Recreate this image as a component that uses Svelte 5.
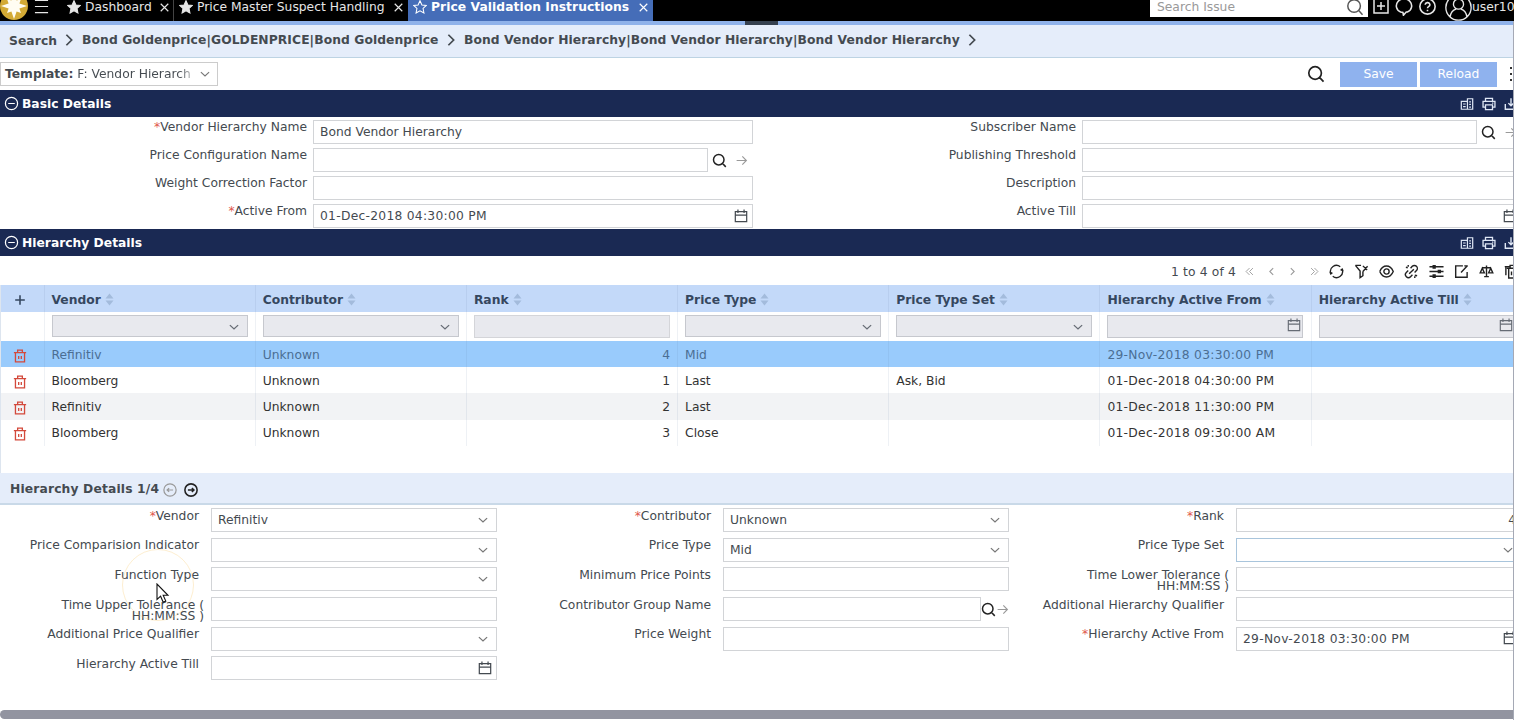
<script lang="ts">
  type Field = {
    label: string;
    label2?: string;
    value?: string;
    required?: boolean;
    kind?: "select" | "date" | "lookup" | "number";
    focused?: boolean;
  };

  const basicColumns: Field[][] = [
    [
      { label: "Vendor Hierarchy Name", value: "Bond Vendor Hierarchy", required: true },
      { label: "Price Configuration Name", kind: "lookup" },
      { label: "Weight Correction Factor" },
      { label: "Active From", value: "01-Dec-2018 04:30:00 PM", required: true, kind: "date" },
    ],
    [
      { label: "Subscriber Name", kind: "lookup" },
      { label: "Publishing Threshold" },
      { label: "Description" },
      { label: "Active Till", kind: "date" },
    ],
  ];

  const detailColumns: Field[][] = [
    [
      { label: "Vendor", value: "Refinitiv", required: true, kind: "select" },
      { label: "Price Comparision Indicator", kind: "select" },
      { label: "Function Type", kind: "select" },
      { label: "Time Upper Tolerance (", label2: "HH:MM:SS )" },
      { label: "Additional Price Qualifier", kind: "select" },
      { label: "Hierarchy Active Till", kind: "date" },
    ],
    [
      { label: "Contributor", value: "Unknown", required: true, kind: "select" },
      { label: "Price Type", value: "Mid", kind: "select" },
      { label: "Minimum Price Points" },
      { label: "Contributor Group Name", kind: "lookup" },
      { label: "Price Weight" },
    ],
    [
      { label: "Rank", value: "4", required: true, kind: "number" },
      { label: "Price Type Set", kind: "select", focused: true },
      { label: "Time Lower Tolerance (", label2: "HH:MM:SS )" },
      { label: "Additional Hierarchy Qualifier" },
      { label: "Hierarchy Active From", value: "29-Nov-2018 03:30:00 PM", required: true, kind: "date" },
    ],
  ];

  const columns = [
    { title: "Vendor", filter: "select" },
    { title: "Contributor", filter: "select" },
    { title: "Rank", filter: "text" },
    { title: "Price Type", filter: "select" },
    { title: "Price Type Set", filter: "select" },
    { title: "Hierarchy Active From", filter: "date" },
    { title: "Hierarchy Active Till", filter: "date" },
  ];

  const rows = [
    ["Refinitiv", "Unknown", "4", "Mid", "", "29-Nov-2018 03:30:00 PM", ""],
    ["Bloomberg", "Unknown", "1", "Last", "Ask, Bid", "01-Dec-2018 04:30:00 PM", ""],
    ["Refinitiv", "Unknown", "2", "Last", "", "01-Dec-2018 11:30:00 PM", ""],
    ["Bloomberg", "Unknown", "3", "Close", "", "01-Dec-2018 09:30:00 AM", ""],
  ];

  let selected = $state(0);

  // all icons share a 16x16 box and are stroked with the current colour
  const icons: Record<string, string> = {
    search: "M7.2 1.5a5.6 5.6 0 1 0 0 11.2a5.6 5.6 0 1 0 0-11.2M11.3 11.2l3.4 3.6",
    arrow: "M2 8h12M9 3l5 5l-5 5",
    down: "M2.5 5.5l5.5 5l5.5-5",
    right: "M5 2l6 6l-6 6",
    left: "M11 2l-6 6l6 6",
    first: "M8 3L3 8l5 5M13 3L8 8l5 5",
    last: "M3 3l5 5l-5 5M8 3l5 5l-5 5",
    close: "M2.5 2.5l11 11M13.5 2.5l-11 11",
    calendar: "M1.5 3h13v11.5h-13zM1.5 7h13M4.5 .5v4M11.5 .5v4",
    collapse: "M8 1.5a6.5 6.5 0 1 0 0 13a6.5 6.5 0 1 0 0-13M4.5 8h7",
    menu: "M1 1.5h14M1 8h14M1 14.500h14",
    add: "M1 1h14v14H1zM8 4v8M4 8h8",
    chat: "M5 12.5A6.8 6.2 0 1 1 11 12.500H10L7.500 15.300L7 12.800z",
    help: "M8 .8a7.2 7.2 0 1 0 0 14.4a7.2 7.2 0 1 0 0-14.4M5.8 6.3a2.2 2 0 1 1 3.2 1.8q-1 .5-1 1.6M8 11v1.5",
    user: "M8 .5a7.5 7.5 0 1 0 0 15a7.5 7.5 0 1 0 0-15M8 3a3 3 0 1 0 0 6a3 3 0 1 0 0-6M3 13.5q.6-3.6 3.5-4.5M13 13.5q-.6-3.6-3.5-4.5",
    building: "M1.500 5h7v9h-7zM8.500 14V2h6v12h-6M3.500 8h3M3.500 11h3M10.500 5.500h2M10.500 8.500h2M10.500 11.500h2",
    print: "M4 5V1.5h8V5M4 11.5H1.2V5h13.6v6.5H12M4 9h8v5.5H4zM11.5 7h1.5",
    download: "M1.5 8v6h13V8M8 1.5v8.5M5 7l3 3l3-3",
    refresh: "M1.800 10A6.500 6.500 0 0 1 12 2.900M14.200 6A6.500 6.500 0 0 1 4 13.100M1 8.500L1.900 10.500L3.600 9.200M15 7.500L14.100 5.500L12.400 6.800",
    filter: "M1.500 1.500l5 6v7l3-2v-4.500M1.500 1.500h6M9.500 8l5-5.500M9.500 2l4.500 4.500",
    eye: "M.8 8q2.500-5.800 7.200-5.800T15.200 8q-2.500 5.800-7.200 5.800T.8 8M8 5.200a2.8 2.8 0 1 0 0 5.600a2.8 2.8 0 1 0 0-5.600",
    link: "M7 4.5l1.8-2a3.1 3.1 0 0 1 4.5 4.5l-2 2M4.5 7l-2 2a3.1 3.1 0 0 0 4.5 4.5l2-2M5.5 10.5l5-5M2 3.5l2 .5M4.5 1v2M14 12.5l-2.5-.5M11.5 15v-2",
    sliders: "M.5 3h15M.5 8h15M.5 13h15M4.500 1.800h2v2.400h-2zM10 6.800h2v2.400h-2zM4.500 11.800h2v2.400h-2z",
    edit: "M9.500 2H1.800v12.200H14V8.500M7.500 9l7-7.500M11 2h3.200",
    scales: "M8 1.500v11.500M5.500 13.500h5M3 4h10M3.500 4.500L1.300 9.500h4.400zM12.500 4.500l-2.200 5h4.400z",
    trash: "M1 4.2h14M5.3 4V1.3h5.4V4M2.8 4.5v10.2h10.4V4.5M6.5 8v3.5M9.5 8v3.5",
    trashes: "M3 4.500h12M6.500 4V1.500h5V4M5 5v10h9V5M.8 2.800h5M2 3v9M8 8v4M11 8v4",
    prev: "M8 1a7 7 0 1 0 0 14a7 7 0 1 0 0-14M4.5 8h7M7 5.8l-2.3 2.2l2.3 2.2",
    next: "M8 1a7 7 0 1 0 0 14a7 7 0 1 0 0-14M4.5 8h7M9 5.8l2.3 2.2l-2.3 2.2",
    plus: "M8 2.5v11M2.5 8h11",
  };

  const star = "M8 .8l2.2 4.8l5.1.6l-3.8 3.5l1 5.1L8 12.3l-4.5 2.5l1-5.1L.7 6.2l5.1-.6z";
  const tools = ["refresh", "filter", "eye", "link", "sliders", "edit", "scales", "trashes"];
</script>

{#snippet icon(name: string, size = 14, weight = 1.5)}
  <svg class="icon" width={size} height={size} viewBox="0 0 16 16" fill="none" stroke="currentColor" stroke-width={weight}>
    <path d={icons[name]} />
  </svg>
{/snippet}

{#snippet starIcon(filled: boolean)}
  <svg class="icon" width="14" height="14" viewBox="0 0 16 16" fill={filled ? "currentColor" : "none"} stroke="currentColor" stroke-width="1.2">
    <path d={star} />
  </svg>
{/snippet}

{#snippet sectionHead(title: string)}
  <div class="section-head">
    {@render icon("collapse", 15, 1.3)}
    <h2>{title}</h2>
    <div class="section-icons">
      {@render icon("building", 14, 1.4)}
      {@render icon("print", 14, 1.5)}
      {@render icon("download", 14, 1.6)}
    </div>
  </div>
{/snippet}

{#snippet formRow(field: Field)}
  <div class="row">
    <div class="label" class:wrapped={field.label2}>
      {#if field.required}<span class="required">*</span>{/if}{field.label}
      {#if field.label2}<br />{field.label2}{/if}
    </div>
    <div class="control">
      <div class="field" class:focused={field.focused} class:number={field.kind === "number"}>
        <span class:date={field.kind === "date"}>{field.value ?? ""}</span>
        {#if field.kind === "select"}
          <i class="muted">{@render icon("down", 12, 1.7)}</i>
        {:else if field.kind === "date"}
          <i class="calendar">{@render icon("calendar", 14, 1.4)}</i>
        {/if}
      </div>
      {#if field.kind === "lookup"}
        <div class="lookup">
          {@render icon("search", 15, 1.6)}
          <i class="go">{@render icon("arrow", 13, 1.4)}</i>
        </div>
      {/if}
    </div>
  </div>
{/snippet}

<div class="app">
  <header>
    <svg class="logo" width="30" height="30" viewBox="0 0 30 30">
      <circle cx="15" cy="15" r="14" fill="#d3aa35" />
      <path d="M15 2l2.6 7.6L22 8l-1.600 4.400L28 15l-7.6 2.6L22 22l-4.400-1.600L15 28l-2.6-7.6L8 22l1.600-4.400L2 15l7.6-2.6L8 8l4.400 1.600z" fill="#fffdf2" />
    </svg>
    <div class="menu">{@render icon("menu", 15, 1.3)}</div>
    <nav>
      <div class="tab first">{@render starIcon(true)}<span>Dashboard</span>{@render icon("close", 11, 1.7)}</div>
      <div class="tab second">{@render starIcon(true)}<span>Price Master Suspect Handling</span>{@render icon("close", 11, 1.7)}</div>
      <div class="tab active">{@render starIcon(false)}<span>Price Validation Instructions</span>{@render icon("close", 11, 1.7)}</div>
    </nav>
    <div class="search-box"><span>Search Issue</span>{@render icon("search", 18, 1.3)}</div>
    <div class="user-icons">
      {@render icon("add", 16, 1.5)}
      {@render icon("chat", 18, 1.4)}
      {@render icon("help", 17, 1.5)}
    </div>
    <div class="user">{@render icon("user", 27, 0.8)}<span>user10</span></div>
  </header>

  <div class="breadcrumb">
    <i class="handle"></i>
    <span class="crumb-root">Search</span>
    {@render icon("right", 14, 2)}
    <span>Bond Goldenprice|GOLDENPRICE|Bond Goldenprice</span>
    {@render icon("right", 14, 2)}
    <span>Bond Vendor Hierarchy|Bond Vendor Hierarchy|Bond Vendor Hierarchy</span>
    {@render icon("right", 14, 2)}
  </div>

  <div class="toolbar">
    <div class="template">
      <b>Template:</b>
      <span class="template-name">F: Vendor Hierarch</span>
      <i class="muted">{@render icon("down", 12, 1.5)}</i>
    </div>
    <div class="actions">
      {@render icon("search", 18, 1.5)}
      <button>Save</button>
      <button>Reload</button>
      <i class="dots"></i>
    </div>
  </div>

  {@render sectionHead("Basic Details")}
  <div class="form basic">
    {#each basicColumns as fields}
      <div class="form-col">
        {#each fields as field}{@render formRow(field)}{/each}
      </div>
    {/each}
  </div>

  {@render sectionHead("Hierarchy Details")}
  <div class="grid-tools">
    <span>1 to 4 of 4</span>
    <div class="pager">
      {@render icon("first", 11, 1.3)}
      {@render icon("left", 9, 1.9)}
      {@render icon("right", 9, 1.9)}
      {@render icon("last", 11, 1.3)}
    </div>
    <div class="tools">
      {#each tools as name}{@render icon(name, 15, 1.5)}{/each}
    </div>
  </div>

  <div class="table">
    <div class="tr head">
      <div class="td tiny">{@render icon("plus", 14, 1.8)}</div>
      {#each columns as column}
        <div class="td">
          {column.title}
          <svg class="sort" width="9" height="13" viewBox="0 0 9 13"><path d="M4.500 .5L8.500 5.500H.5zM4.500 12.500L8.500 7.500H.5z" fill="#a3bbdc" /></svg>
        </div>
      {/each}
    </div>
    <div class="tr filters">
      <div class="td tiny"></div>
      {#each columns as column}
        <div class="td">
          <div class="filter" class:short={column.filter === "select"} class:light={column.filter === "text"}>
            {#if column.filter === "select"}
              {@render icon("down", 12, 1.8)}
            {:else if column.filter === "date"}
              {@render icon("calendar", 14, 1.3)}
            {/if}
          </div>
        </div>
      {/each}
    </div>
    {#each rows as row, i}
      <!-- svelte-ignore a11y_click_events_have_key_events, a11y_no_static_element_interactions -->
      <div class="tr body" class:striped={i === 2} class:selected={i === selected} onclick={() => (selected = i)}>
        <div class="td tiny trash">{@render icon("trash", 14, 1.5)}</div>
        {#each row as cell, c}
          <div class="td" class:right={c === 2} class:date={c >= 5}>{cell}</div>
        {/each}
      </div>
    {/each}
  </div>

  <div class="detail-head">
    <b>Hierarchy Details {selected + 1}/4</b>
    <i class="prev">{@render icon("prev", 14, 1.4)}</i>
    <i class="next">{@render icon("next", 14, 1.8)}</i>
  </div>
  <div class="form detail">
    {#each detailColumns as fields}
      <div class="form-col">
        {#each fields as field}{@render formRow(field)}{/each}
      </div>
    {/each}
  </div>

  <div class="scrollbar"></div>
  <i class="edge"></i>
  <i class="click-ring"></i>
  <svg class="cursor" width="14" height="22" viewBox="0 0 14 22">
    <path d="M1 1v15.500l3.600-3.300l2.600 6l2.600-1.100l-2.600-5.800h4.800z" fill="#fff" stroke="#111" stroke-width="1.100" />
  </svg>
</div>

<style>
  :global(body) {
    margin: 0;
    overflow: hidden;
  }

  .app {
    position: relative;
    display: flex;
    flex-direction: column;
    width: 1514px;
    height: 720px;
    overflow: hidden;
    background: #fff;
    color: #444a50;
    font-family: "DejaVu Sans", Verdana, sans-serif;
    font-size: 12.3px;
    line-height: 16px;
    white-space: nowrap;
  }
  .icon {
    display: block;
    flex: none;
  }
  i {
    display: block;
    flex: none;
  }
  .date {
    letter-spacing: 0.27px;
  }

  header {
    display: flex;
    flex: none;
    height: 21px;
    background: #000;
    color: #e6e6e6;
    overflow: hidden;
  }
  header > * {
    flex: none;
  }
  .logo {
    margin: -9px 0 0 -1px;
  }
  .menu {
    box-sizing: border-box;
    padding-left: 5px;
    width: 31px;
    margin-top: -1px;
  }
  nav {
    display: flex;
    width: 1090px;
  }
  .tab {
    display: flex;
    flex: none;
    box-sizing: border-box;
    height: 21px;
    padding: 0 4px 7px 5px;
    align-items: center;
    gap: 4px;
  }
  .tab span {
    flex: 1;
  }
  .first {
    width: 114px;
    padding: 0 3px 7px 7px;
    border-right: 1px solid #444;
  }
  .second {
    width: 234px;
  }
  .active {
    width: 245px;
    background: #456db8;
    color: #fff;
    font-weight: bold;
    letter-spacing: 0.05px;
  }
  .search-box {
    display: flex;
    box-sizing: border-box;
    width: 218px;
    height: 17px;
    padding: 0 4px 4px 7px;
    align-items: center;
    justify-content: space-between;
    background: #fff;
    color: #999;
  }
  .search-box .icon {
    color: #555;
  }
  .user-icons {
    display: flex;
    box-sizing: border-box;
    gap: 6px;
    padding-left: 5px;
    width: 77px;
    margin-top: -2px;
  }
  .user {
    display: flex;
    margin-top: -6px;
  }
  .user span {
    margin-top: 5px;
  }

  .breadcrumb {
    position: relative;
    display: flex;
    flex: none;
    box-sizing: border-box;
    height: 37px;
    padding: 0 0 2px 9px;
    align-items: center;
    border-top: 4px solid #8fb2ea;
    border-bottom: 1px solid #bdd3e3;
    background: #e5edfa;
    font-weight: bold;
    letter-spacing: 0.08px;
  }
  .breadcrumb span {
    margin: 0 5.500px 0 6px;
  }
  .breadcrumb .crumb-root {
    margin: 2px 5px 0 0;
  }
  .handle {
    position: absolute;
    left: 745px;
    top: -4px;
    width: 33px;
    height: 4px;
    background: #35404f;
  }

  .toolbar {
    display: flex;
    flex: none;
    height: 32px;
    align-items: center;
  }
  .template {
    display: flex;
    box-sizing: border-box;
    width: 218px;
    height: 24px;
    padding: 0 5px 0 4px;
    align-items: center;
    gap: 4px;
    border: 1px solid #ccc;
  }
  .template-name {
    flex: 1;
    overflow: hidden;
    background: linear-gradient(90deg, #444a50 86%, #ddd 100%);
    background-clip: text;
    color: transparent;
  }
  .actions {
    display: flex;
    align-items: center;
    margin-left: 1089px;
    color: #222;
  }
  button {
    width: 77px;
    height: 25px;
    flex: none;
    margin: 0 0 0 3px;
    padding: 0;
    border: 0;
    background: #8fb2ee;
    color: #fff;
    font: inherit;
  }
  .actions .icon + button {
    margin-left: 15px;
  }
  .dots {
    width: 2px;
    height: 2px;
    margin-left: 13px;
    background: #333;
    box-shadow: 0 -6px #333, 0 6px #333;
  }

  .section-head {
    display: flex;
    flex: none;
    box-sizing: border-box;
    height: 27px;
    padding-left: 4px;
    align-items: center;
    background: #1a2953;
    color: #fff;
  }
  h2 {
    flex: none;
    width: 1438px;
    margin: 0 0 0 3px;
    font-size: inherit;
  }
  .section-icons {
    display: flex;
    flex: none;
    gap: 8px;
    color: #dfe7f5;
  }

  .form {
    display: flex;
    flex: none;
  }
  .form-col {
    flex: none;
  }
  .row {
    display: flex;
    align-items: flex-start;
  }
  .label {
    flex: none;
    box-sizing: border-box;
    text-align: right;
  }
  .required {
    color: #e0564c;
  }
  .control {
    display: flex;
    flex: none;
  }
  .field {
    display: flex;
    flex: 1;
    box-sizing: border-box;
    height: 24px;
    padding: 0 6px;
    align-items: center;
    justify-content: space-between;
    border: 1px solid #d2d4d7;
    background: #fff;
  }
  .field.focused {
    border-color: #a9c5dc;
  }
  .field.number {
    justify-content: flex-end;
    padding-right: 5px;
  }
  .calendar {
    margin: -1px -2px 0 0;
  }
  .lookup {
    display: flex;
    box-sizing: border-box;
    align-items: center;
    color: #222;
  }
  .go {
    color: #999;
  }
  .muted {
    color: #777;
    padding-right: 1px;
  }

  .basic {
    height: 109px;
    padding-top: 3px;
  }
  .basic .row {
    height: 28px;
  }
  .basic .label {
    width: 313px;
    padding-right: 6px;
    margin-top: -1px;
  }
  .basic .form-col + .form-col .label {
    width: 329px;
  }
  .basic .control {
    width: 440px;
  }
  .basic .lookup {
    width: 45px;
    padding-left: 4px;
    gap: 8px;
  }

  .grid-tools {
    display: flex;
    flex: none;
    height: 29px;
    padding: 2px 0 0 1171px;
    box-sizing: border-box;
    align-items: center;
  }
  .grid-tools > span {
    flex: none;
    width: 73px;
    letter-spacing: 0.15px;
  }
  .pager {
    display: flex;
    flex: none;
    align-items: center;
    gap: 12px;
    width: 85px;
    color: #999;
  }
  .tools {
    display: flex;
    flex: none;
    gap: 10px;
    color: #222;
  }

  .table {
    flex: none;
    height: 188px;
    border-left: 1px solid #dde5ef;
  }
  .tr {
    display: flex;
    height: 26.200px;
  }
  .td {
    display: flex;
    flex: none;
    box-sizing: border-box;
    width: 211.200px;
    padding: 1px 7px 0;
    align-items: center;
    border-right: 1px solid rgba(90, 120, 160, 0.1);
  }
  .td.tiny {
    width: 43.500px;
    padding: 3px 5px 0 0;
    justify-content: center;
  }
  .tr.head {
    height: 27px;
    background: #c3d9f9;
    color: #35475f;
    font-weight: bold;
  }
  .head .td {
    padding-top: 2px;
  }
  .sort {
    margin: -1px 0 0 4px;
  }
  .filters {
    height: 29px;
  }
  .filters .td {
    padding: 3px 7px 0;
    align-items: flex-start;
  }
  .filter {
    display: flex;
    box-sizing: border-box;
    width: 196px;
    height: 23px;
    flex: none;
    padding: 0 1px 3px 0;
    align-items: center;
    justify-content: flex-end;
    border: 1px solid #c6c8ce;
    background: #e8e9ee;
    color: #666c75;
  }
  .filter.short {
    height: 22px;
    padding: 1px 7px 0 0;
  }
  .filter.light {
    border-color: #d4d5d9;
  }
  .body {
    background: #fff;
    color: #333;
  }
  .body.striped {
    background: #f2f3f5;
  }
  .body.selected {
    background: #99cbfc;
    color: #4b6e93;
  }
  .td.right {
    justify-content: flex-end;
  }
  .trash {
    color: #d3493b;
  }

  .detail-head {
    display: flex;
    flex: none;
    box-sizing: border-box;
    height: 32px;
    padding-left: 10px;
    align-items: center;
    border-bottom: 2px solid #c9d9e8;
    background: #e5edfa;
  }
  .detail-head b {
    letter-spacing: 0.15px;
    padding-top: 1px;
  }
  .prev {
    margin: 3px 0 0 4px;
    color: #999;
  }
  .next {
    margin: 3px 0 0 7px;
    color: #222;
  }

  .detail {
    height: 202px;
    padding-top: 3px;
  }
  .detail .row {
    height: 29.700px;
  }
  .detail .label {
    width: 211px;
    margin-top: 2.500px;
    padding-right: 12px;
    line-height: 11.500px;
  }
  .detail .form-col + .form-col .label {
    width: 226px;
  }
  .detail .form-col + .form-col + .form-col .label {
    width: 227px;
  }
  .detail .label.wrapped {
    position: relative;
    left: 5px;
  }
  .detail .control {
    width: 286px;
  }
  .detail .lookup {
    width: 28px;
    padding-top: 1px;
  }

  .scrollbar {
    flex: none;
    height: 9px;
    border-radius: 5px 0 0 5px;
    background: #9294a0;
  }
  .edge {
    position: absolute;
    top: 21px;
    right: 0;
    bottom: 0;
    width: 1px;
    background: #a5a9b5;
  }
  .click-ring {
    position: absolute;
    left: 122px;
    top: 549px;
    width: 70px;
    height: 70px;
    border: 1px solid rgba(250, 205, 120, 0.35);
    border-radius: 50%;
  }
  .cursor {
    position: absolute;
    left: 156px;
    top: 583px;
  }
</style>
